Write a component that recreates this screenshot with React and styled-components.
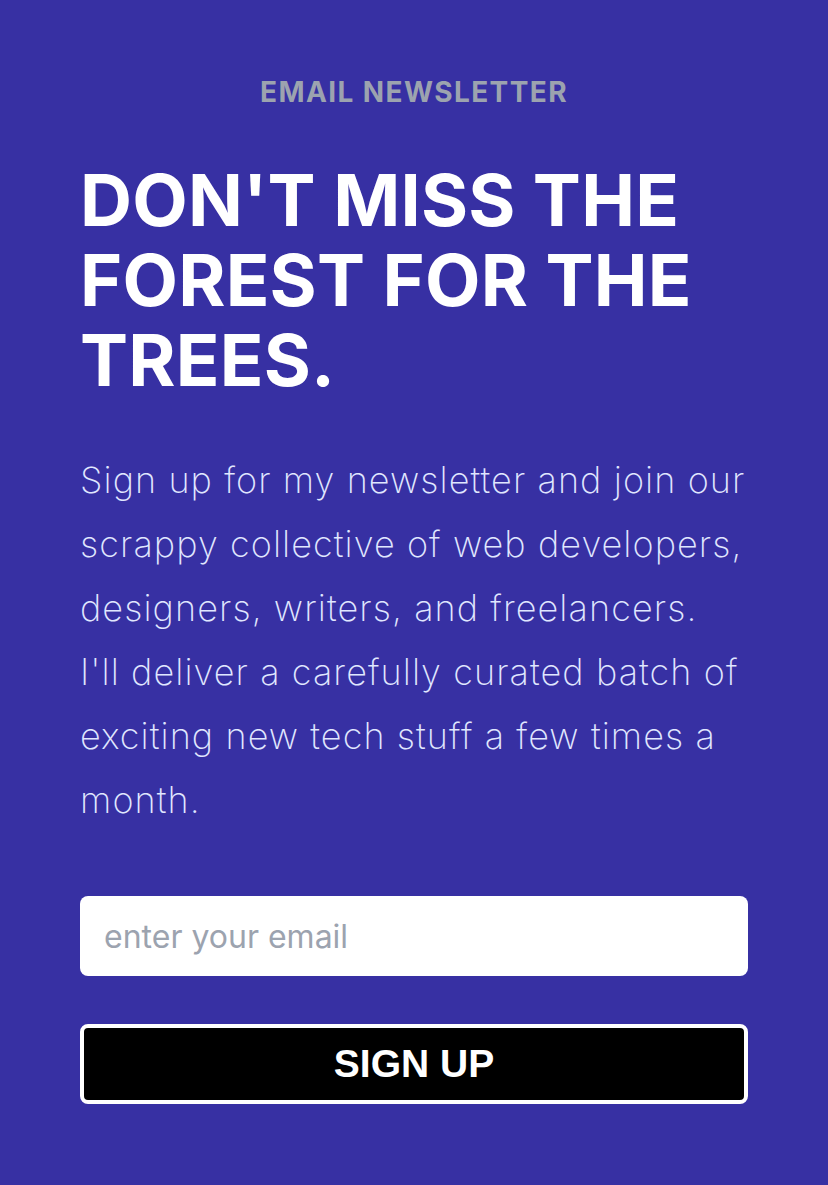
import React from "react";
import styled, { createGlobalStyle } from "styled-components";

const GlobalStyle = createGlobalStyle`
  html, body {
    margin: 0;
    padding: 0;
    background: #3730a3;
  }
  * {
    box-sizing: border-box;
  }
`;

const Section = styled.section`
  min-height: 1185px;
  background: #3730a3;
  padding: 72px 80px 80px;
  font-family: Inter, "Noto Sans", sans-serif;
`;

const Eyebrow = styled.p`
  margin: 0;
  text-align: center;
  color: #9ca3af;
  font-size: 28px;
  font-weight: 700;
  letter-spacing: 0.05em;
  line-height: 40px;
`;

const Heading = styled.h2`
  margin: 48px 0 0;
  color: #ffffff;
  font-size: 72px;
  font-weight: 700;
  line-height: 80px;
  letter-spacing: 0.003em;
`;

const Body = styled.p`
  margin: 48px 0 0;
  color: #e0e7ff;
  font-size: 36px;
  font-weight: 200;
  line-height: 64px;
  letter-spacing: 0.03em;
`;

const Form = styled.form`
  display: flex;
  flex-direction: column;
  gap: 48px;
  margin-top: 64px;
`;

const EmailInput = styled.input`
  height: 80px;
  width: 100%;
  border: none;
  border-radius: 8px;
  background: #ffffff;
  padding: 0 24px;
  font-family: Inter, "Noto Sans", sans-serif;
  font-size: 32px;
  color: #111827;
  outline: none;

  &::placeholder {
    color: #9ca3af;
  }
`;

const SubmitButton = styled.button`
  height: 80px;
  width: 100%;
  border: 4px solid #ffffff;
  border-radius: 8px;
  background: #000000;
  color: #ffffff;
  font-family: "Liberation Sans", Arial, sans-serif;
  font-size: 39px;
  font-weight: 700;
  cursor: pointer;
`;

export default function App() {
  return (
    <>
      <GlobalStyle />
      <Section>
        <Eyebrow>EMAIL NEWSLETTER</Eyebrow>
        <Heading>DON'T MISS THE FOREST FOR THE TREES.</Heading>
        <Body>
          Sign up for my newsletter and join our scrappy collective of web
          developers, designers, writers, and freelancers.
          <br />
          I'll deliver a carefully curated batch of exciting new tech stuff a
          few times a month.
        </Body>
        <Form onSubmit={(e) => e.preventDefault()}>
          <EmailInput type="email" placeholder="enter your email" />
          <SubmitButton type="submit">SIGN UP</SubmitButton>
        </Form>
      </Section>
    </>
  );
}
